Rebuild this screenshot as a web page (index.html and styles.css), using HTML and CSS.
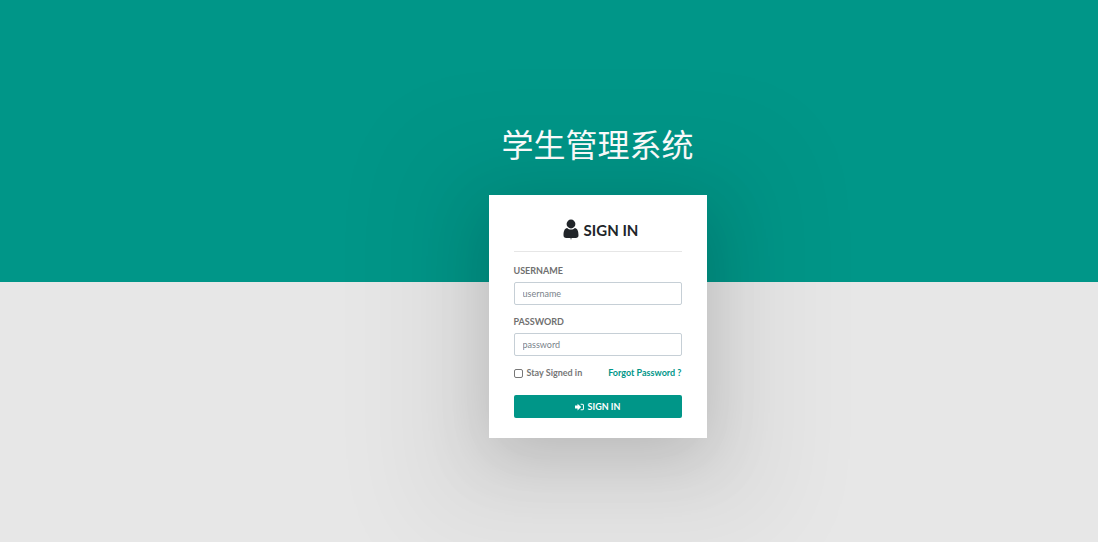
FILE: index.html
```html
<!DOCTYPE html>
<html lang="zh">
<head>
<meta charset="utf-8">
<title>学生管理系统</title>
<link rel="stylesheet" href="styles.css">
</head>
<body>
<main class="login-content">
  <h1 class="logo">学生管理系统</h1>
  <form class="login-box">
    <h2 class="login-head">
      <svg class="user-icon" viewBox="0 0 16 21" aria-hidden="true"><ellipse cx="8" cy="5" rx="4.4" ry="4.4"/><path d="M4.200 9C1.600 9.300.5 12 .5 16.200c0 1.800 1 2.800 2.700 2.800h4.300L8 21l.5-2h4.300c1.700 0 2.700-1 2.700-2.800C15.500 12 14.400 9.300 11.800 9 10.800 10 9.500 10.500 8 10.500S5.200 10 4.200 9z"/></svg>
      SIGN IN
    </h2>
    <div class="form-group">
      <label class="control-label" for="username">USERNAME</label>
      <input class="form-control" id="username" type="text" placeholder="username">
    </div>
    <div class="form-group">
      <label class="control-label" for="password">PASSWORD</label>
      <input class="form-control" id="password" type="password" placeholder="password">
    </div>
    <div class="utility">
      <label class="stay"><input class="stay-check" type="checkbox">Stay Signed in</label>
      <a class="forgot" href="#">Forgot Password ?</a>
    </div>
    <button class="submit" type="submit">
      <svg class="submit-icon" viewBox="0 0 16 14" aria-hidden="true"><path fill="currentColor" d="M0 4.500h4.500V1l6.500 6-6.500 6V9.500H0z"/><path fill="none" stroke="currentColor" stroke-width="1.800" d="M10 2h3q2 0 2 2v6q0 2-2 2h-3"/></svg>
      SIGN IN
    </button>
  </form>
</main>
</body>
</html>
```
FILE: styles.css
```css
* {
  box-sizing: border-box;
}

body {
  margin: 0;
  font-family: Lato, "Noto Sans CJK SC", sans-serif;
  font-size: 9px;
  line-height: 14px;
  color: #212529;
  background: #e7e7e7;
}

.login-content {
  display: flex;
  flex-direction: column;
  align-items: center;
  min-height: 100vh;
  padding: 121px 0 40px 97px;
  overflow: hidden;
  background: linear-gradient(#009688 52%, #e7e7e7 52%);
}

.logo {
  margin: 0 0 26px;
  font-size: 32px;
  line-height: 48px;
  font-weight: 400;
  color: #fff;
}

.login-box {
  width: 218px;
  padding: 24px 25px 20px;
  background: #fff;
  box-shadow: 0 18px 96px 72px rgba(0, 0, 0, 0.05), 0 18px 62px rgba(0, 0, 0, 0.16);
}

.login-head {
  display: flex;
  justify-content: center;
  align-items: center;
  gap: 5px;
  margin: 0 0 12px;
  padding: 0 0 11px 6px;
  border-bottom: 1px solid #e6e6e6;
  font-size: 15px;
  line-height: 20px;
  font-weight: 700;
}

.user-icon {
  width: 16px;
  height: 21px;
  fill: currentColor;
}

.form-group {
  margin-bottom: 10px;
}

.control-label {
  display: block;
  margin-bottom: 4px;
  font-weight: 700;
  color: #707070;
}

.form-control {
  display: block;
  width: 100%;
  height: 23px;
  padding: 0 8px;
  border: 1px solid #c6cfd6;
  border-radius: 2px;
  background: #fff;
  font: inherit;
  color: #495057;
}

.form-control::placeholder {
  color: #7a838b;
  opacity: 1;
}

.utility {
  display: flex;
  justify-content: space-between;
  align-items: center;
  margin-bottom: 15px;
  font-weight: 700;
}

.stay {
  display: flex;
  align-items: center;
  gap: 4px;
  color: #777;
}

.stay-check {
  appearance: none;
  width: 9px;
  height: 9px;
  margin: 0;
  border: 1px solid #777;
  border-radius: 2px;
}

.stay-check:checked {
  background: #009688;
}

.forgot {
  color: #009688;
  text-decoration: none;
}

.submit {
  display: flex;
  justify-content: center;
  align-items: center;
  gap: 4px;
  width: 100%;
  height: 23px;
  padding: 0;
  border: 0;
  border-radius: 2px;
  background: #009688;
  color: #fff;
  font: inherit;
  font-weight: 700;
}

.submit-icon {
  width: 9px;
  height: 8px;
}
```
